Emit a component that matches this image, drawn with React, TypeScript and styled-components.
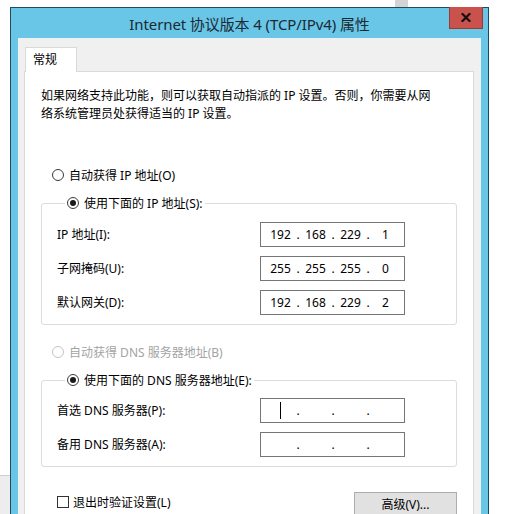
import styled, { createGlobalStyle } from "styled-components";

const GlobalStyle = createGlobalStyle`
  html, body {
    margin: 0;
    padding: 0;
    background: #fff;
  }
  body {
    width: 520px;
    height: 514px;
    overflow: hidden;
    font-family: "Noto Sans", "Noto Sans CJK SC", sans-serif;
    color: #000;
  }
`;

type Field = { label: string; value?: string[]; caret?: boolean };

const ipFields: Field[] = [
  { label: "IP 地址(I):", value: ["192", "168", "229", "1"] },
  { label: "子网掩码(U):", value: ["255", "255", "255", "0"] },
  { label: "默认网关(D):", value: ["192", "168", "229", "2"] },
];

const dnsFields: Field[] = [
  { label: "首选 DNS 服务器(P):", caret: true },
  { label: "备用 DNS 服务器(A):" },
];

function IpBox({ value, caret }: { value?: string[]; caret?: boolean }) {
  const parts = value ?? ["", "", "", ""];
  return (
    <IpInput>
      {parts.map((part, i) => (
        <IpPart key={i}>
          <Segment>{i === 0 && caret ? <Caret /> : part}</Segment>
          {i < 3 && <Dot>.</Dot>}
        </IpPart>
      ))}
    </IpInput>
  );
}

function Radio({
  label,
  checked,
  disabled,
}: {
  label: string;
  checked?: boolean;
  disabled?: boolean;
}) {
  return (
    <RadioLine $disabled={disabled}>
      <RadioCircle $checked={checked} $disabled={disabled} />
      {label}
    </RadioLine>
  );
}

function Fields({ items }: { items: Field[] }) {
  return (
    <FieldGrid>
      {items.map(({ label, value, caret }) => (
        <FieldRow key={label}>
          <FieldLabel>{label}</FieldLabel>
          <IpBox value={value} caret={caret} />
        </FieldRow>
      ))}
    </FieldGrid>
  );
}

function App() {
  return (
    <Desktop>
      <GlobalStyle />
      <BackStrip />
      <Window>
        <TitleBar>
          <span />
          <Title>Internet 协议版本 4 (TCP/IPv4) 属性</Title>
          <CloseButton>
            <svg width="10" height="9" viewBox="0 0 10 9">
              <path
                d="M1.5 1 L8.5 8 M8.5 1 L1.5 8"
                stroke="#111"
                strokeWidth="2.2"
                strokeLinecap="square"
              />
            </svg>
          </CloseButton>
        </TitleBar>
        <Body>
          <TabStrip>
            <Tab>常规</Tab>
          </TabStrip>
          <Panel>
            <Description>
              如果网络支持此功能，则可以获取自动指派的 IP 设置。否则，你需要从网
              <br />
              络系统管理员处获得适当的 IP 设置。
            </Description>

            <Section $gap={43}>
              <Radio label="自动获得 IP 地址(O)" />
            </Section>
            <Group $gap={10} $padTop={10}>
              <Legend>
                <Radio label="使用下面的 IP 地址(S):" checked />
              </Legend>
              <Fields items={ipFields} />
            </Group>

            <Section $gap={18}>
              <Radio label="自动获得 DNS 服务器地址(B)" disabled />
            </Section>
            <Group $gap={10} $padTop={9}>
              <Legend>
                <Radio label="使用下面的 DNS 服务器地址(E):" checked />
              </Legend>
              <Fields items={dnsFields} />
            </Group>

            <Footer>
              <CheckLine>
                <CheckBox />
                退出时验证设置(L)
              </CheckLine>
              <Button>高级(V)...</Button>
            </Footer>
          </Panel>
        </Body>
      </Window>
    </Desktop>
  );
}

const Desktop = styled.div`
  display: flex;
  align-items: flex-start;
  height: 514px;
  overflow: hidden;
  background-color: #fff;
  background-image: linear-gradient(#d4d4d4, #d4d4d4);
  background-size: 13px 7px;
  background-position: 395px 0;
  background-repeat: no-repeat;
`;

const BackStrip = styled.div`
  align-self: stretch;
  width: 10px;
  background: linear-gradient(#fff 0 475px, #cfcfcf 475px 476px, #ededed 476px);
`;

const Window = styled.div`
  box-sizing: border-box;
  width: 479px;
  margin-top: 7px;
  padding: 0 7px;
  background: #69c6e7;
  border: 1px solid #214c5f;
  border-bottom: none;
`;

const TitleBar = styled.div`
  display: grid;
  grid-template-columns: 1fr auto 1fr;
  align-items: center;
  height: 30px;
  margin: 0 -7px;
  padding: 0 5px;
`;

const Title = styled.div`
  font-size: 15px;
  color: #1b2a32;
  white-space: nowrap;
  letter-spacing: -0.1px;
`;

const CloseButton = styled.div`
  justify-self: end;
  align-self: start;
  box-sizing: border-box;
  width: 34px;
  height: 22px;
  margin-top: -1px;
  display: flex;
  align-items: center;
  justify-content: center;
  background: #c9524d;
  border: 1px solid #9c3b36;
  border-top: none;
`;

const Body = styled.div`
  height: 467px;
  overflow: hidden;
  padding: 9px 7px 0 6px;
  background: #f0f0f0;
`;

const TabStrip = styled.div`
  display: flex;
  padding-left: 1px;
`;

const Tab = styled.div`
  box-sizing: border-box;
  position: relative;
  z-index: 1;
  width: 52px;
  height: 25px;
  margin-bottom: -1px;
  padding: 3px 0 0 7px;
  font-size: 12px;
  line-height: 18px;
  background: #fff;
  border: 1px solid #d9d9d9;
  border-bottom: none;
`;

const Panel = styled.div`
  display: flex;
  flex-direction: column;
  align-items: flex-start;
  height: 460px;
  padding: 15px 15px 0 16px;
  background: #fff;
  border: 1px solid #d9d9d9;
  border-bottom: none;
`;

const Description = styled.p`
  margin: 0;
  font-size: 12px;
  line-height: 18px;
`;

const Section = styled.div<{ $gap: number }>`
  margin-top: ${(p) => p.$gap}px;
  margin-left: 11px;
`;

const RadioLine = styled.div<{ $disabled?: boolean }>`
  display: flex;
  align-items: center;
  gap: 5px;
  height: 18px;
  font-size: 12px;
  color: ${(p) => (p.$disabled ? "#a3a3a3" : "#000")};
  white-space: nowrap;
`;

const RadioCircle = styled.span<{ $checked?: boolean; $disabled?: boolean }>`
  box-sizing: border-box;
  display: flex;
  align-items: center;
  justify-content: center;
  width: 12px;
  height: 12px;
  border-radius: 50%;
  border: 1px solid ${(p) => (p.$disabled ? "#c4c4c4" : "#3a3a3a")};
  background: #fff;

  &::after {
    content: "";
    width: 6px;
    height: 6px;
    border-radius: 50%;
    background: #1a1a1a;
    display: ${(p) => (p.$checked ? "block" : "none")};
  }
`;

const Group = styled.fieldset<{ $gap: number; $padTop: number }>`
  box-sizing: border-box;
  width: 416px;
  min-width: 0;
  margin: ${(p) => p.$gap}px 0 0 0;
  padding: ${(p) => p.$padTop}px 0 9px 15px;
  border: 1px solid #dcdcdc;
  border-radius: 3px;
`;

const Legend = styled.legend`
  margin-left: 8px;
  padding: 0 2px;
`;

const FieldGrid = styled.div`
  display: flex;
  flex-direction: column;
  gap: 9px;
`;

const FieldRow = styled.div`
  display: grid;
  grid-template-columns: 203px 145px;
  align-items: center;
`;

const FieldLabel = styled.span`
  font-size: 12px;
  line-height: 18px;
  white-space: nowrap;
`;

const IpInput = styled.div`
  box-sizing: border-box;
  display: flex;
  height: 25px;
  padding-left: 5px;
  border: 1px solid #767676;
  background: #fff;
  font-size: 12px;
  line-height: 23px;
`;

const IpPart = styled.span`
  display: flex;
`;

const Segment = styled.span`
  display: flex;
  align-items: center;
  justify-content: center;
  width: 29px;
`;

const Dot = styled.span`
  width: 6px;
  text-align: center;
`;

const Caret = styled.span`
  width: 1px;
  height: 17px;
  background: #000;
`;

const Footer = styled.div`
  box-sizing: border-box;
  display: flex;
  justify-content: space-between;
  align-items: flex-start;
  width: 416px;
  margin-top: 25px;
  padding-left: 16px;
`;

const CheckLine = styled.div`
  display: flex;
  align-items: center;
  gap: 4px;
  height: 18px;
  margin-top: 1px;
  font-size: 12px;
`;

const CheckBox = styled.span`
  box-sizing: border-box;
  width: 12px;
  height: 12px;
  border: 1px solid #333;
  background: #fff;
`;

const Button = styled.div`
  box-sizing: border-box;
  width: 103px;
  height: 23px;
  display: flex;
  align-items: center;
  justify-content: center;
  font-size: 12px;
  background: #e1e1e1;
  border: 1px solid #adadad;
`;

export default App;
